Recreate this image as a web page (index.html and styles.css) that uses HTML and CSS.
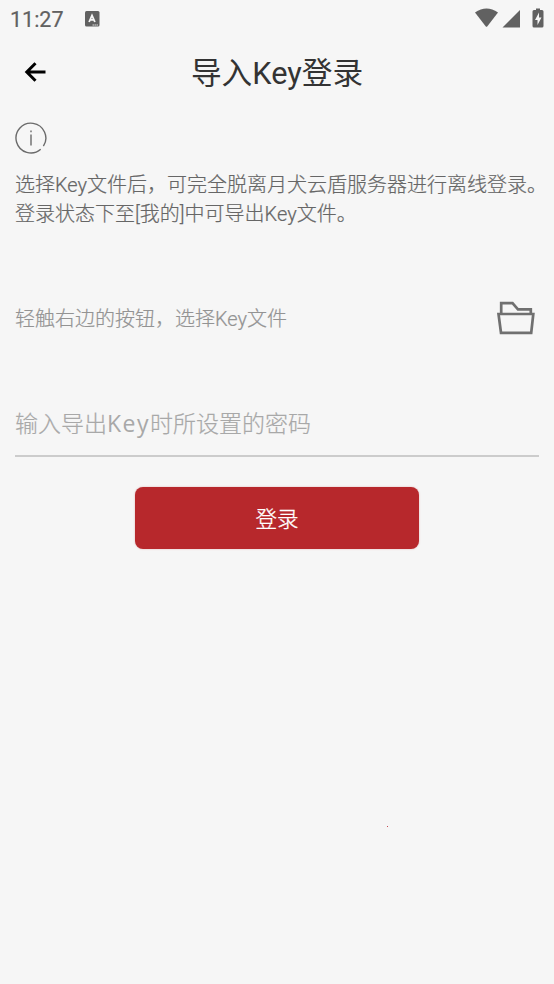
FILE: index.html
```html
<!DOCTYPE html>
<html lang="zh-CN">
<head>
<meta charset="utf-8">
<title>导入Key登录</title>
<link rel="stylesheet" href="styles.css">
</head>
<body>
<div class="status">
  <span class="time">11:27</span>
  <svg class="badge" width="15" height="16" viewBox="0 0 15 16"><rect width="14.5" height="15.5" rx="1.5" fill="#616161"/><path d="M4.1 11 7 4.5 9.900 11M5.200 8.900h3.600" fill="none" stroke="#f6f6f6" stroke-width="1.800"/><path d="M7.500 14h5.500" stroke="#ddd" stroke-width="1" stroke-dasharray="1.600 .4"/></svg>
  <svg class="signals" width="70" height="20" viewBox="0 0 70 20" fill="#616161"><path d="M0 4.500Q11.500-3.500 23 4.500L12.200 18.500Q11.500 19.200 10.800 18.500Z"/><path d="M27.500 19.500 45 2V19.500Z"/><path d="M59 2h2V.5h4V2h2q1.500 0 1.500 1.500V18q0 1.500-1.500 1.500h-8q-1.500 0-1.500-1.500V3.500Q57.500 2 59 2Z"/><path d="m64 4.500-4 7.500h2.500v5l4-7.500H64Z" fill="#f6f6f6"/></svg>
</div>
<header class="bar">
  <svg class="back" width="22" height="20" viewBox="0 0 22 20" fill="none" stroke="#000" stroke-width="3"><path d="M21.500 10H3M11.500 1.300 2.800 10 11.500 18.700"/></svg>
  <h1>导入Key登录</h1>
</header>
<main>
  <svg class="info" width="32" height="32" viewBox="0 0 32 32" fill="none" stroke="#6b6b6b" stroke-width="1.400"><path d="M28.400 24.200A14.900 14.900 0 1 0 25.700 27.300"/><path d="M16 12.500V23.500M16 8.500V10.300"/></svg>
  <p class="note">选择Key文件后，可完全脱离月犬云盾服务器进行离线登录。<br>登录状态下至[我的]中可导出Key文件。</p>
  <div class="file">
    <span>轻触右边的按钮，选择Key文件</span>
    <svg width="38" height="34" viewBox="0 0 38 34" fill="none" stroke="#707070" stroke-width="2.700"><path d="M4.200 13V2.200H15.500L21 8.300H33.800V13M1.500 13H36.300L34.200 31.800H4Z"/></svg>
  </div>
  <div class="field">输入导出<span class="mono">Key</span>时所设置的密码</div>
  <button class="login">登录</button>
</main>
<i class="speck"></i>
</body>
</html>
```
FILE: styles.css
```css
* { box-sizing: border-box; }
body {
  margin: 0;
  height: 984px;
  overflow: hidden;
  background: #f6f6f6;
  font-family: Roboto, "Noto Sans CJK SC", sans-serif;
  color: #666;
}
.status {
  display: flex;
  align-items: center;
  height: 38px;
  padding: 0 9px 0 10px;
  color: #616161;
}
.time { width: 75px; padding-top: 2px; font-size: 21.5px; line-height: 38px; -webkit-text-stroke: .2px #616161; }
.badge { margin-bottom: 1px; }
.signals { margin: 0 0 2px auto; }
.bar {
  display: grid;
  grid-template-columns: 50px 1fr 50px;
  align-items: center;
  height: 70px;
}
.back { margin: 0 0 2px 24px; }
h1 {
  margin: 0;
  padding-top: 2px;
  text-align: center;
  font-size: 30.7px;
  font-weight: 400;
  line-height: 60px;
  color: #333;
  white-space: nowrap;
}
main { padding: 14px 15px 0; }
.info { display: block; }
.note {
  margin: 17px 0 0;
  font-size: 20px;
  font-weight: 300;
  line-height: 29px;
  white-space: nowrap;
  -webkit-text-stroke: .2px currentColor;
}
.file {
  display: flex;
  align-items: center;
  justify-content: space-between;
  height: 60px;
  margin-top: 59px;
  padding-right: 4px;
  font-size: 20px;
  font-weight: 300;
  color: #939393;
  -webkit-text-stroke: .2px currentColor;
}
.file > span { padding-bottom: 1px; }
.field {
  height: 65px;
  margin-top: 44px;
  border-bottom: 2px solid #ccc;
  font-size: 23px;
  font-weight: 300;
  line-height: 62px;
  color: #a8a8a8;
  white-space: nowrap;
  -webkit-text-stroke: .2px currentColor;
}
.mono { font-family: "Open Sans", sans-serif; font-weight: 400; letter-spacing: 1.5px; -webkit-text-stroke: 0; }
.login {
  display: block;
  width: 284px;
  height: 62px;
  margin: 30px auto 0;
  padding: 3px 0 0;
  border: 0;
  border-radius: 8px;
  background: #b7282c;
  box-shadow: 0 0 2px #b7282c55;
  color: #fff;
  font: 300 21.5px/59px Roboto, "Noto Sans CJK SC", sans-serif;
  -webkit-text-stroke: .3px #fff;
}
.speck {
  position: absolute;
  left: 387px;
  top: 826px;
  width: 1px;
  height: 1px;
  background: #c44b55;
}
```
